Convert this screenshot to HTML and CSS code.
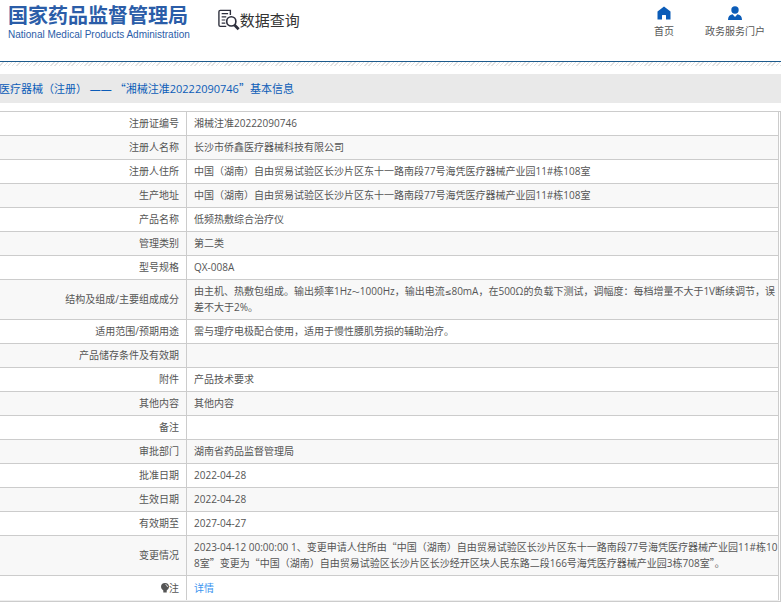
FILE: index.html
```html
<!DOCTYPE html>
<html lang="zh-CN">
<head>
  <meta charset="UTF-8" />
  <meta name="viewport" content="width=device-width, initial-scale=1.0"/>
  <title>数据查询 - 国家药品监督管理局</title>
  <link rel="stylesheet" href="styles.css">
</head>
<body>
  <header class="header">
    <div class="logo">
      <div class="logo-cn">国家药品监督管理局</div>
      <div class="logo-en">National Medical Products Administration</div>
    </div>
    <h1 class="site-name">
      <svg width="22" height="22" viewBox="0 0 24 23" fill="none" stroke="#2d2f3c">
        <path d="M9 18.500H2.500Q1 18.500 1 17V2.500Q1 1 2.500 1H13.500V6" stroke-width="1.500"/>
        <path d="M4 4.500h7M4 8h5M4 11.500h4M4 15h4" stroke-width="1.300"/>
        <circle cx="14.500" cy="13" r="5" stroke-width="1.800"/>
        <path d="M18 17l4.500 4.500" stroke-width="3"/>
      </svg>
      <span>数据查询</span>
    </h1>
    <nav class="nav">
      <a href="#">
        <svg width="14" height="14" viewBox="0 0 14 14" fill="#0b5cb8">
          <path d="M7 .5L.5 5.500V13.500H5V9.500Q5 9 5.500 9h3Q9 9 9 9.500v4h4.500V5.500z"/>
        </svg>
        <span>首页</span>
      </a>
      <a href="#">
        <svg width="14" height="14" viewBox="0 0 14 14" fill="#0b5cb8">
          <circle cx="7" cy="4" r="3.700"/>
          <path d="M0 14Q0 9 4.500 8.200L7 11l2.500-2.800Q14 9 14 14z"/>
        </svg>
        <span>政务服务门户</span>
      </a>
    </nav>
  </header>
  <div class="stripe"></div>

  <main>
    <h2 class="page-title">医疗器械（注册） —— <span class="quote">“</span>湘械注准20222090746<span class="quote">”</span>基本信息</h2>

    <div class="table-box">
      <table class="info">
        <tr><th scope="row">注册证编号</th><td>湘械注准20222090746</td></tr>
        <tr><th scope="row">注册人名称</th><td>长沙市侨鑫医疗器械科技有限公司</td></tr>
        <tr><th scope="row">注册人住所</th><td>中国（湖南）自由贸易试验区长沙片区东十一路南段77号海凭医疗器械产业园11#栋108室</td></tr>
        <tr><th scope="row">生产地址</th><td>中国（湖南）自由贸易试验区长沙片区东十一路南段77号海凭医疗器械产业园11#栋108室</td></tr>
        <tr><th scope="row">产品名称</th><td>低频热敷综合治疗仪</td></tr>
        <tr><th scope="row">管理类别</th><td>第二类</td></tr>
        <tr><th scope="row">型号规格</th><td>QX-008A</td></tr>
        <tr><th scope="row">结构及组成/主要组成成分</th><td>由主机、热敷包组成。输出频率1Hz<span class="sign">～</span>1000Hz，输出电流<span class="sign">≤</span>80mA，在500Ω的负载下测试，调幅度：每档增量不大于1V断续调节，误差不大于2%。</td></tr>
        <tr><th scope="row">适用范围/预期用途</th><td>需与理疗电极配合使用，适用于慢性腰肌劳损的辅助治疗。</td></tr>
        <tr><th scope="row">产品储存条件及有效期</th><td></td></tr>
        <tr><th scope="row">附件</th><td>产品技术要求</td></tr>
        <tr><th scope="row">其他内容</th><td>其他内容</td></tr>
        <tr><th scope="row">备注</th><td></td></tr>
        <tr><th scope="row">审批部门</th><td>湖南省药品监督管理局</td></tr>
        <tr><th scope="row">批准日期</th><td>2022-04-28</td></tr>
        <tr><th scope="row">生效日期</th><td>2022-04-28</td></tr>
        <tr><th scope="row">有效期至</th><td>2027-04-27</td></tr>
        <tr><th scope="row">变更情况</th><td>2023-04-12 00:00:00 1、变更申请人住所由<span class="quote">“</span>中国（湖南）自由贸易试验区长沙片区东十一路南段77号海凭医疗器械产业园11#栋108室<span class="quote">”</span>变更为<span class="quote">“</span>中国（湖南）自由贸易试验区长沙片区长沙经开区块人民东路二段166号海凭医疗器械产业园3栋708室<span class="quote">”</span>。</td></tr>
        <tr>
          <th scope="row"><svg class="bulb" width="8" height="10" viewBox="0 0 8 10">
            <path d="M4 0a4 4 0 0 0-4 4q0 1.500 2.300 3.500V9.500h3.400V7.500Q8 5.500 8 4a4 4 0 0 0-4-4z" fill="#555"/>
            <path d="M4.500 1.500Q6.500 2 6.500 4" fill="none" stroke="#ddd"/>
          </svg>注</th>
          <td><a class="detail" href="#">详情</a></td>
        </tr>
      </table>
    </div>
  </main>
</body>
</html>
```
FILE: styles.css
```css
body {
  margin: 0;
  font-family: "Open Sans", "Noto Sans CJK SC", sans-serif;
  font-size: 10px;
  line-height: 16px;
  color: #555;
  background: #fff;
  overflow-x: hidden;
}
a {
  color: inherit;
  text-decoration: none;
}
.header {
  display: flex;
  align-items: flex-start;
  height: 61px;
  padding: 0 16px 0 8px;
  border-bottom: 1px solid #1c5a8c;
}
.logo {
  color: #2b5da8;
  padding-top: 4px;
  white-space: nowrap;
}
.logo-cn {
  font-size: 20px;
  font-weight: 700;
  line-height: 24px;
}
.logo-en {
  font-family: "Liberation Sans", Arial, sans-serif;
  font-size: 10px;
  line-height: 14px;
}
.site-name {
  display: flex;
  align-items: center;
  margin: 0 0 0 28px;
  padding-top: 8px;
  font-size: 15px;
  font-weight: 400;
  line-height: 24px;
  color: #333;
}
.nav {
  display: flex;
  gap: 31px;
  margin-left: auto;
  padding-top: 6px;
}
.nav a {
  display: flex;
  flex-direction: column;
  align-items: center;
  gap: 3px;
}
.stripe {
  height: 4px;
  background: repeating-linear-gradient(135deg, #fff 0, #fff 2px, #e2e2e2 2px, #e2e2e2 3px);
}
.page-title {
  margin: 8px 0;
  background: #e9e9e9;
  color: #0b5cb8;
  font-size: 11px;
  font-weight: 400;
  line-height: 28px;
  text-indent: -1px;
}
.quote {
  font-family: "Noto Sans CJK SC", sans-serif;
}
.sign {
  font-family: "DejaVu Sans", "Noto Sans CJK SC", sans-serif;
  font-size: 8px;
  line-height: 1;
}
.table-box {
  border: 1px solid #ccc;
  border-left: 0;
  padding-right: 1px;
}
.info {
  width: 100%;
  border-collapse: collapse;
}
.info th,
.info td {
  padding: 3px 7px 4px;
  height: 16px;
  border-bottom: 1px solid #ccc;
}
.info th {
  width: 172px;
  text-align: right;
  font-weight: 400;
  border-right: 1px solid #ccc;
}
.info td {
  padding-right: 0;
  border-right: 1px solid #ccc;
  word-break: break-all;
}
.info tr:nth-child(even) {
  background: #f8f8f8;
}
.info tr:last-child th,
.info tr:last-child td {
  padding: 4px 7px;
  border-bottom-color: #eee;
}
.bulb {
  vertical-align: -1px;
}
.detail {
  color: #3a94f0;
}
```
